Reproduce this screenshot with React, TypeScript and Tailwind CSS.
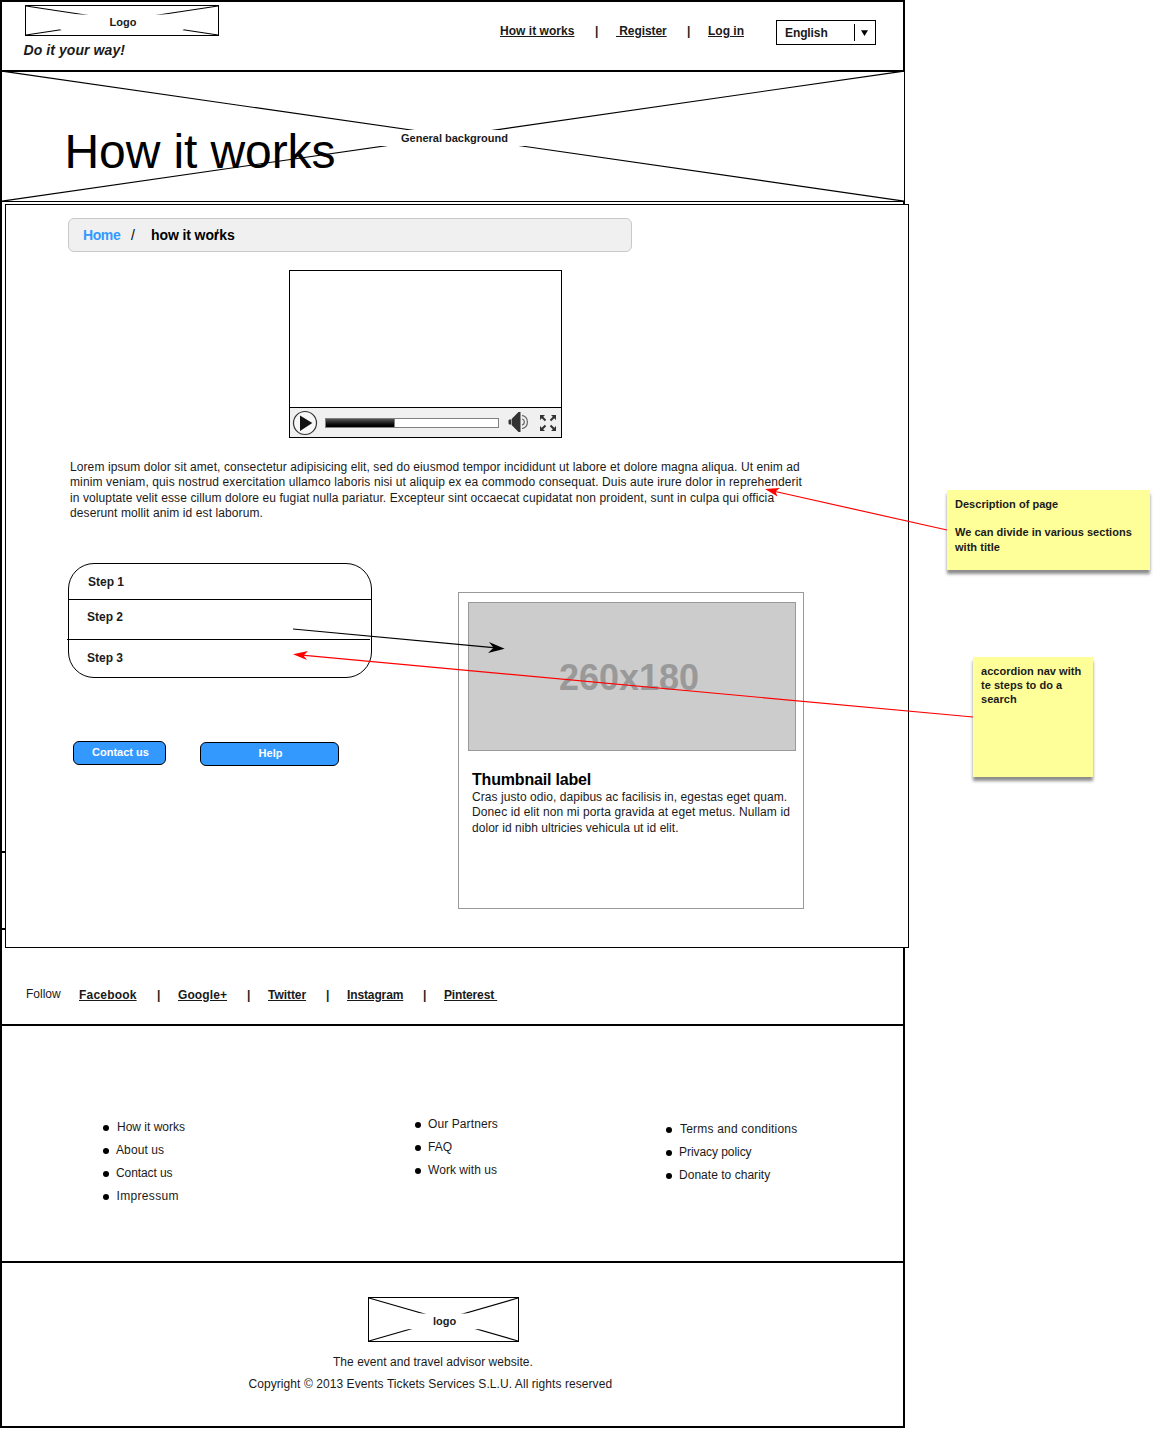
import React from "react";

type CrossBoxProps = {
  width: number;
  height: number;
  maskTop: number;
  maskHeight: number;
  rise?: number;
  label: string;
  className: string;
  labelClass: string;
};

/* Image placeholder: two diagonals interrupted by a centred label. */
function CrossBox({ width, height, maskTop, maskHeight, rise = 0, label, className, labelClass }: CrossBoxProps) {
  return (
    <div className={`relative shrink-0 bg-white ${className}`}>
      <svg className="absolute inset-0 overflow-visible" width={width} height={height} viewBox={`0 0 ${width} ${height}`} stroke="#000" strokeWidth="1.1">
        <path d={`M0 ${-rise}L${width} ${height - rise}M0 ${height - rise}L${width} ${-rise}`} />
        <rect x={width * 0.18} y={maskTop} width={width * 0.64} height={maskHeight} fill="#fff" stroke="none" />
      </svg>
      <span className={`absolute whitespace-nowrap text-[11px] leading-3 font-bold ${labelClass}`}>{label}</span>
    </div>
  );
}

function Bar({ className }: { className: string }) {
  return <span className={`shrink-0 ${className}`}>|</span>;
}

function Header() {
  return (
    <header className="flex h-[70px] items-start border-b-2 border-black">
      <div className="w-[474px] pt-[3px] pl-[21px]">
        <CrossBox
          width={192}
          height={29}
          maskTop={8.5}
          maskHeight={15.7}
          label="Logo"
          className="ml-[2px] h-[31px] w-[194px] border border-black"
          labelClass="top-[10px] left-[83.5px]"
        />
        <p className="mt-[6px] ml-[0.5px] text-[14px] leading-4 font-bold italic tracking-[0.08px]">Do it your way!</p>
      </div>
      <nav className="flex pt-[22px] pl-6 text-[12px] leading-[14px] font-bold whitespace-pre">
        <a className="w-[94px] tracking-[0.04px] underline underline-offset-1">How it works</a>
        <Bar className="w-[22px] pl-px" />
        <a className="w-[70px] tracking-[-0.08px] underline underline-offset-1"> Register</a>
        <Bar className="w-[22px] pl-px" />
        <a className="w-[68px] underline underline-offset-1">Log in</a>
      </nav>
      <div className="mt-[18px] flex h-[25px] w-[100px] border border-black">
        <span className="w-[77px] pt-[5px] pl-2 text-[12px] leading-[14px] font-bold tracking-[-0.1px]">English</span>
        <span className="mt-[3px] h-[17px] w-px bg-black" />
        <svg className="mt-[9px] ml-[6px]" width="7" height="6" viewBox="0 0 7 6">
          <path d="M0 .3H7L3.5 6Z" />
        </svg>
      </div>
    </header>
  );
}

function Hero() {
  return (
    <section className="relative w-[903px]">
      <CrossBox
        width={902}
        height={130}
        maskTop={58}
        maskHeight={16}
        rise={0.9}
        label="General background"
        className="h-[130px] w-[903px] border-r border-b border-black"
        labelClass="top-[60px] left-[399px]"
      />
      <h1 className="absolute top-[53px] left-[62.5px] text-[48px] leading-[54px] tracking-[-0.1px] whitespace-nowrap text-black">How it works</h1>
    </section>
  );
}

function Video() {
  return (
    <div className="mt-[18px] ml-[283px] h-[168px] w-[273px] border border-black">
      <div className="h-[136px]" />
      <div className="flex h-[30px] border-t border-black bg-[#f0f0f0]">
        <svg className="mt-[2px] ml-[2px]" width="26" height="26" viewBox="0 0 26 26">
          <circle cx="13" cy="13" r="11.5" fill="#f7f7f7" stroke="#333" strokeWidth="1.2" />
          <path d="M8 5.5L20.3 13L8 21Z" fill="#111" />
        </svg>
        <div className="mt-[10px] ml-[7px] h-[10px] w-[174px] border border-[#808080] bg-white">
          <div className="h-2 w-[69px] border-r border-[#808080] bg-linear-to-b from-[#555] to-black" />
        </div>
        <svg className="mt-[4px] ml-[9px]" width="21" height="21" viewBox="0 0 21 21">
          <path d="M1.2 7.5H3V12.5H1.2L.5 11.5V8.5ZM3.6 7L10.5 0H12.5V20H10.5L3.6 13Z" fill="#333" />
          <path d="M14 7Q16.3 7.5 16.3 10T14 13M14 3.4Q19.4 4.7 19.4 10T14 16.6" fill="none" stroke="#666" strokeWidth="1.2" />
        </svg>
        <svg className="mt-[7px] ml-[11px]" width="17" height="17" viewBox="0 0 17 17" fill="#333" stroke="#333" strokeWidth="2">
          <path d="M0 0H5L0 5ZM16 0V5L11 0ZM0 16V11L5 16ZM16 16H11L16 11Z" stroke="none" />
          <path d="M2 2L5.5 5.5M14 2L10.5 5.5M2 14L5.5 10.5M14 14L10.5 10.5" />
        </svg>
      </div>
    </div>
  );
}

function Steps() {
  return (
    <div className="h-[115px] w-[304px] rounded-[26px] border border-black text-[12px] leading-[14px] font-bold">
      <div className="h-[36px] border-b border-black pt-[11px] pl-[19px]">Step 1</div>
      <div className="h-[39px] pt-[10px] pl-[18px]">Step 2</div>
      <div className="-ml-[2px] h-[38px] w-[303px] border-t border-black pt-[11px] pl-5">Step 3</div>
    </div>
  );
}

function Thumbnail() {
  return (
    <article className="mt-[29px] ml-[86px] h-[317px] w-[346px] border border-[#999] pt-[9px] pl-[9px]">
      <div className="flex h-[149px] w-[328px] justify-center border border-[#999] bg-[#ccc] pt-[54px] pr-[6px] text-[36px] leading-[41px] font-bold text-[#999]">
        260x180
      </div>
      <h2 className="mt-5 ml-[4px] text-[16px] leading-[18px] font-bold tracking-[-0.18px] text-black">Thumbnail label</h2>
      <p className="mt-px ml-[4px] text-[12px] leading-[15.33px] whitespace-nowrap">
        <span className="block tracking-[0.06px]">Cras justo odio, dapibus ac facilisis in, egestas eget quam.</span>
        <span className="block tracking-[0.11px]">Donec id elit non mi porta gravida at eget metus. Nullam id</span>
        <span className="block tracking-[0.04px]">dolor id nibh ultricies vehicula ut id elit.</span>
      </p>
    </article>
  );
}

function Panel() {
  return (
    <main className="relative mt-[2px] ml-[3px] h-[744px] w-[904px] border border-black bg-white pt-[13px]">
      <nav className="relative ml-[62px] flex h-[34px] w-[564px] rounded-[6px] border border-[#c8c8c8] bg-[#f0f0f0] pt-[8px] pl-[14px] text-[14px] leading-4 font-bold">
        <a className="w-[48px] tracking-[-0.4px] text-[#3399ff]">Home</a>
        <span className="w-5 font-normal text-black">/</span>
        <span className="tracking-[-0.1px] text-black">how it works</span>
        <span className="absolute top-[8px] left-[145.5px] font-normal text-black">/</span>
      </nav>
      <Video />
      <p className="mt-[22px] ml-[64px] text-[12px] leading-[15.33px] whitespace-nowrap">
        <span className="block tracking-[0.09px]">Lorem ipsum dolor sit amet, consectetur adipisicing elit, sed do eiusmod tempor incididunt ut labore et dolore magna aliqua. Ut enim ad</span>
        <span className="block tracking-[0.115px]">minim veniam, quis nostrud exercitation ullamco laboris nisi ut aliquip ex ea commodo consequat. Duis aute irure dolor in reprehenderit</span>
        <span className="block tracking-[0.097px]">in voluptate velit esse cillum dolore eu fugiat nulla pariatur. Excepteur sint occaecat cupidatat non proident, sunt in culpa qui officia</span>
        <span className="block tracking-[0.1px]">deserunt mollit anim id est laborum.</span>
      </p>
      <div className="mt-[41.68px] ml-[62px] flex items-start">
        <div>
          <Steps />
          <div className="mt-[63px] ml-[5px] flex items-start gap-[34px] text-[11px] leading-3 font-bold text-white">
            <button className="h-6 w-[93px] rounded-[6px] border border-black bg-[#3399ff] pb-[1px] pl-[2px]">Contact us</button>
            <button className="mt-px h-6 w-[139px] rounded-[6px] border border-black bg-[#3399ff] pb-[1px] pl-[2px]">Help</button>
          </div>
        </div>
        <Thumbnail />
      </div>
    </main>
  );
}

function Follow() {
  return (
    <div className="flex h-[78px] border-b-2 border-black pt-[40px] pl-[77px] text-[12px] leading-[14px] font-bold whitespace-pre">
      <span className="-mt-px -ml-[53px] w-[53px] font-normal">Follow</span>
      <a className="w-[77px] tracking-[0.2px] underline underline-offset-1">Facebook</a>
      <Bar className="w-[22px] pl-px" />
      <a className="w-[68px] tracking-[0.1px] underline underline-offset-1">Google+</a>
      <Bar className="w-[22px] pl-px" />
      <a className="w-[57px] tracking-[-0.05px] underline underline-offset-1">Twitter</a>
      <Bar className="w-[22px] pl-px" />
      <a className="w-[75px] tracking-[-0.12px] underline underline-offset-1">Instagram</a>
      <Bar className="w-[22px] pl-px" />
      <a className="tracking-[-0.15px] underline underline-offset-1">Pinterest </a>
    </div>
  );
}

type LinkItem = [text: string, style: string];

const companyLinks: LinkItem[] = [
  ["How it works", "pl-px"],
  ["About us", "tracking-[0.1px]"],
  ["Contact us", "tracking-[-0.1px]"],
  ["Impressum", "pl-[0.5px] tracking-[0.33px]"],
];
const partnerLinks: LinkItem[] = [
  ["Our Partners", "tracking-[0.1px]"],
  ["FAQ", ""],
  ["Work with us", "tracking-[0.05px]"],
];
const legalLinks: LinkItem[] = [
  ["Terms and conditions", "pl-px tracking-[0.2px]"],
  ["Privacy policy", "tracking-[-0.06px]"],
  ["Donate to charity", "tracking-[0.03px]"],
];

function LinkList({ items, className }: { items: LinkItem[]; className: string }) {
  return (
    <ul className={`text-[12px] leading-[23px] ${className}`}>
      {items.map(([text, style]) => (
        <li key={text} className="flex items-center">
          <span className="mt-[1px] mr-[7px] size-[6px] rounded-full bg-black" />
          <span className={style}>{text}</span>
        </li>
      ))}
    </ul>
  );
}

function Note({ lines, className }: { lines: string[]; className: string }) {
  return (
    <div className={`bg-[#ffff99] pl-2 text-[11px] leading-[14.2px] font-bold tracking-[0.03px] whitespace-pre shadow-[0_4px_3px_rgba(0,0,0,0.45)] ${className}`}>
      {lines.map((line, i) => (
        <div key={i}>{line || " "}</div>
      ))}
    </div>
  );
}

export default function App() {
  return (
    <div className="relative flex h-[1431px] w-[1153px] items-start overflow-hidden bg-white font-['Liberation_Sans',Arial,sans-serif] text-[#1a1a1a]">
      <div className="relative h-[1428px] w-[905px] shrink-0 border-2 border-black">
        <div className="absolute top-[849px] left-0 h-[79px] w-[900px] border-y-2 border-black" />
        <Header />
        <Hero />
        <Panel />
        <Follow />
        <div className="flex h-[237px] border-b-2 border-black">
          <LinkList className="w-[312px] pt-[90px] pl-[101px]" items={companyLinks} />
          <LinkList className="w-[251px] pt-[87px] pl-[101px]" items={partnerLinks} />
          <LinkList className="pt-[92px] pl-[101px]" items={legalLinks} />
        </div>
        <footer className="pt-[34px] text-[12px] leading-[14px] whitespace-nowrap">
          <CrossBox
            width={149}
            height={43}
            maskTop={15.5}
            maskHeight={15.7}
            label="logo"
            className="ml-[366px] h-[45px] w-[151px] border border-black"
            labelClass="top-[17px] left-[64px]"
          />
          <p className="mt-[13px] ml-[331px] tracking-[0.03px]">The event and travel advisor website.</p>
          <p className="mt-[8px] ml-[246.5px] tracking-[0.07px]">Copyright © 2013 Events Tickets Services S.L.U. All rights reserved</p>
        </footer>
      </div>

      <aside className="pt-[490px] pl-[42px]">
        <Note className="h-20 w-[203px] pt-[7px]" lines={["Description of page", "", "We can divide in various sections", "with title"]} />
        <Note className="mt-[87px] ml-[26px] h-[120px] w-[120px] pt-[7px]" lines={["accordion nav with", "te steps to do a", "search"]} />
      </aside>

      <svg className="pointer-events-none absolute inset-0" width="1153" height="1431" viewBox="0 0 1153 1431" fill="none" strokeWidth="1.2">
        <path d="M947 530L773 491" stroke="#f00" />
        <path d="M765 489L780 488L775.5 491.6L777.5 496.5Z" fill="#f00" />
        <path d="M973 717L302 655.2" stroke="#f00" />
        <path d="M293 654.3L308 651L303.5 655.4L307 660Z" fill="#f00" />
        <path d="M293 629L496 647.9" stroke="#000" />
        <path d="M504.7 648.8L489 642L493.5 647.8L488 653Z" fill="#000" />
      </svg>
    </div>
  );
}
